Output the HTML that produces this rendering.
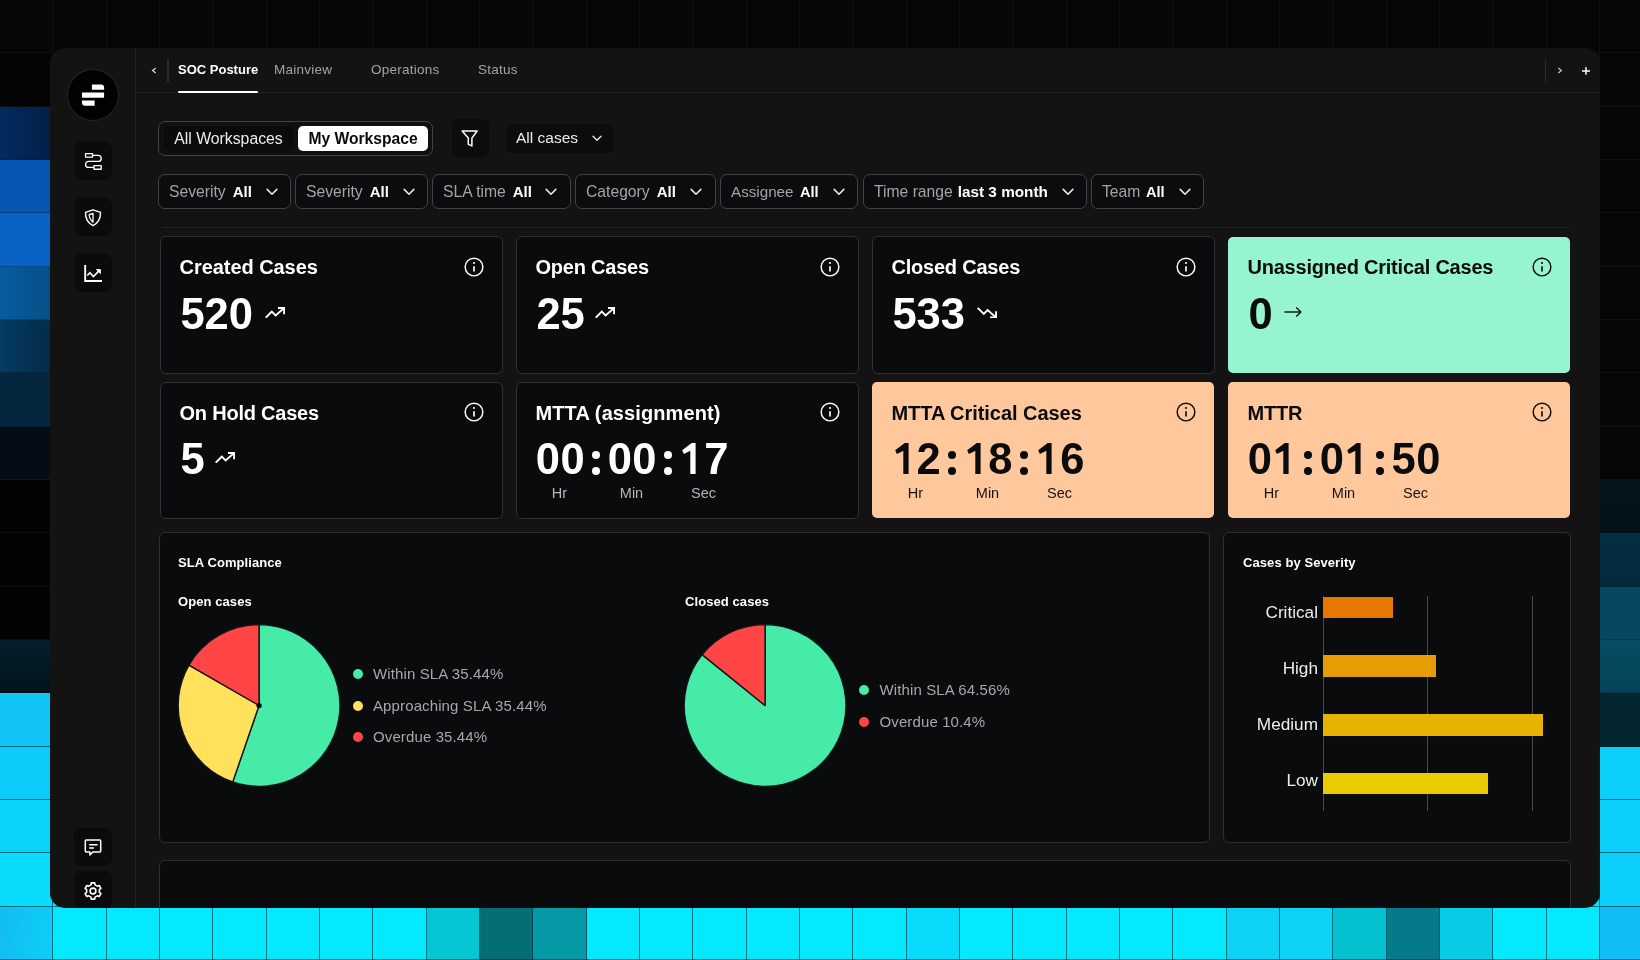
<!DOCTYPE html>
<html lang="en">
<head>
<meta charset="utf-8">
<title>SOC Posture</title>
<style>
*{box-sizing:border-box;margin:0;padding:0}
html,body{width:1640px;height:960px;overflow:hidden;background:#060607}
body{font-family:"Liberation Sans",sans-serif;color:#fff;position:relative}
.c{position:absolute;width:53.34px;height:53.34px}
.win{will-change:transform;position:absolute;left:50px;top:48px;width:1550px;height:860px;border-radius:15px;background:#131314;overflow:hidden}
.in{position:absolute;left:-50px;top:-48px;width:1640px;height:960px}
.in>*{position:absolute}
.vline{left:135px;top:48px;width:1px;height:860px;background:#232326}
.hline{left:136px;top:92px;width:1464px;height:1px;background:#232326}
.logo{left:68px;top:70px;width:50px;height:50px;border-radius:50%;background:#020203;box-shadow:0 0 0 1px #242427}
.logo b{position:absolute;background:#fff;border-radius:1.5px;height:5px}
.sb{left:74px;width:38px;height:38px;border-radius:7px;background:#0b0b0d;color:#fff}
.sb svg{position:absolute;left:9px;top:9px}
.tab{top:62px;font-size:13.500px;line-height:16px;color:#a3a3a8;white-space:nowrap;letter-spacing:.25px}
.tab.act{color:#fff;font-weight:700;font-size:13px;letter-spacing:0}
.ul{left:178px;top:91px;width:80px;height:2px;background:#fff;border-radius:1px}
.tsep{width:1.500px;background:#2c2c2f;border-radius:1px}
.nav{top:62px;font-size:13px;line-height:16px;color:#c8c8cc}
.ws{left:158px;top:121px;width:275px;height:35px;border:1px solid #424248;border-radius:7px;background:#101012}
.ws1{left:164px;top:126px;width:129px;height:25px;border-radius:5px;background:#0b0b0c;color:#ececee;font-size:15.800px;line-height:25px;text-align:center}
.ws2{left:298px;top:126px;width:130px;height:25px;border-radius:5px;background:#fff;color:#0a0a0b;font-size:15.650px;font-weight:700;line-height:25px;text-align:center}
.fb{left:452px;top:119px;width:37px;height:38px;border-radius:7px;background:#0c0c0d}
.ac{left:507px;top:124px;width:106px;height:29px;border-radius:6px;background:#0c0c0d;font-size:15.5px;line-height:28px;padding-left:9px;color:#ececee}
.ac .chev{position:absolute;right:11.500px;top:11px;width:10px;height:6.700px}
.f{top:174px;height:35px;border:1px solid #424248;border-radius:7px;background:#0c0c0e;font-size:15px;line-height:33px;padding-left:10px;white-space:nowrap}
.fl{color:#a3a3a8}
.fv{color:#fff;font-weight:700}
.fc{display:inline-block;vertical-align:top;height:33px;color:#e8e8ea}
.fc svg{display:block;margin-top:12.800px}
.div{left:162px;top:227px;width:1408px;height:1px;background:#222225}
.card{width:343px;height:137px;border:1px solid #2f2f34;border-radius:6px;background:#0a0b0d;color:#fff}
.card>*{position:absolute}
.card.green{background:#96f5cf;border-color:transparent;border-top-width:0;color:#0a0b0d;border-radius:5px}
.card.orange{background:#ffc79c;border-color:transparent;color:#0a0b0d;border-radius:5px}
.ct{left:18.500px;top:17.500px;font-size:20px;font-weight:700;line-height:24px;white-space:nowrap;letter-spacing:-0.22px}
.info{left:301px;top:17.500px}
.r2 .info{top:16.500px}
.num{left:19.500px;top:53px;font-size:43.500px;font-weight:700;line-height:48px;letter-spacing:-0.1px}
.ti{top:69.600px}
.ti svg{display:block}
.r2 .num{top:52px}
.r2 .ti{top:68.600px}
.tm{top:52px;width:49.200px;height:48px;font-size:43.500px;font-weight:700;line-height:48px;white-space:nowrap}
.d{display:inline-block;width:24.600px;height:48px;text-align:center;vertical-align:top;position:relative}
.one{position:absolute;left:0;top:0}
.col{top:67.5px;width:8px;height:25px}
.col:before,.col:after{content:"";position:absolute;left:0;width:8px;height:8px;border-radius:50%;background:currentColor}
.col:before{top:0}.col:after{top:16.5px}
.tl{top:101px;width:48px;margin-left:-1.5px;font-size:14.5px;line-height:18px;text-align:center;color:#b4b4b8}
.orange .tl,.green .tl{color:#17140f}
.panel{border:1px solid #2f2f34;border-radius:6px;background:#0a0b0d}
.pt{font-size:13px;font-weight:700;line-height:16px;color:#fff;white-space:nowrap;letter-spacing:.08px}
.lg{font-size:15px;line-height:20px;color:#a6a6ab;white-space:nowrap;padding-left:21px;letter-spacing:.12px}
.lg i{position:absolute;left:0.500px;top:5px;width:10px;height:10px;border-radius:50%}
.gl{top:596px;width:1px;height:215px;background:#4a4a4f}
.bar{left:1323px;height:21.5px}
.bl{left:1217px;width:101px;text-align:right;font-size:17.2px;line-height:28px;color:#ededf0}
</style>
</head>
<body>
<div class="c" style="left:0.0px;top:0.0px;background:#060607;box-shadow:inset -1px -1px 0 0 rgba(255,255,255,0.045);"></div>
<div class="c" style="left:53.33px;top:0.0px;background:#060607;box-shadow:inset -1px -1px 0 0 rgba(255,255,255,0.045);"></div>
<div class="c" style="left:106.67px;top:0.0px;background:#060607;box-shadow:inset -1px -1px 0 0 rgba(255,255,255,0.045);"></div>
<div class="c" style="left:160.0px;top:0.0px;background:#060607;box-shadow:inset -1px -1px 0 0 rgba(255,255,255,0.045);"></div>
<div class="c" style="left:213.33px;top:0.0px;background:#060607;box-shadow:inset -1px -1px 0 0 rgba(255,255,255,0.045);"></div>
<div class="c" style="left:266.67px;top:0.0px;background:#060607;box-shadow:inset -1px -1px 0 0 rgba(255,255,255,0.045);"></div>
<div class="c" style="left:320.0px;top:0.0px;background:#060607;box-shadow:inset -1px -1px 0 0 rgba(255,255,255,0.045);"></div>
<div class="c" style="left:373.33px;top:0.0px;background:#060607;box-shadow:inset -1px -1px 0 0 rgba(255,255,255,0.045);"></div>
<div class="c" style="left:426.67px;top:0.0px;background:#060607;box-shadow:inset -1px -1px 0 0 rgba(255,255,255,0.045);"></div>
<div class="c" style="left:480.0px;top:0.0px;background:#060607;box-shadow:inset -1px -1px 0 0 rgba(255,255,255,0.045);"></div>
<div class="c" style="left:533.33px;top:0.0px;background:#060607;box-shadow:inset -1px -1px 0 0 rgba(255,255,255,0.045);"></div>
<div class="c" style="left:586.67px;top:0.0px;background:#060607;box-shadow:inset -1px -1px 0 0 rgba(255,255,255,0.045);"></div>
<div class="c" style="left:640.0px;top:0.0px;background:#060607;box-shadow:inset -1px -1px 0 0 rgba(255,255,255,0.045);"></div>
<div class="c" style="left:693.33px;top:0.0px;background:#060607;box-shadow:inset -1px -1px 0 0 rgba(255,255,255,0.045);"></div>
<div class="c" style="left:746.67px;top:0.0px;background:#060607;box-shadow:inset -1px -1px 0 0 rgba(255,255,255,0.045);"></div>
<div class="c" style="left:800.0px;top:0.0px;background:#060607;box-shadow:inset -1px -1px 0 0 rgba(255,255,255,0.045);"></div>
<div class="c" style="left:853.33px;top:0.0px;background:#060607;box-shadow:inset -1px -1px 0 0 rgba(255,255,255,0.045);"></div>
<div class="c" style="left:906.67px;top:0.0px;background:#060607;box-shadow:inset -1px -1px 0 0 rgba(255,255,255,0.045);"></div>
<div class="c" style="left:960.0px;top:0.0px;background:#060607;box-shadow:inset -1px -1px 0 0 rgba(255,255,255,0.045);"></div>
<div class="c" style="left:1013.33px;top:0.0px;background:#060607;box-shadow:inset -1px -1px 0 0 rgba(255,255,255,0.045);"></div>
<div class="c" style="left:1066.67px;top:0.0px;background:#060607;box-shadow:inset -1px -1px 0 0 rgba(255,255,255,0.045);"></div>
<div class="c" style="left:1120.0px;top:0.0px;background:#060607;box-shadow:inset -1px -1px 0 0 rgba(255,255,255,0.045);"></div>
<div class="c" style="left:1173.33px;top:0.0px;background:#060607;box-shadow:inset -1px -1px 0 0 rgba(255,255,255,0.045);"></div>
<div class="c" style="left:1226.67px;top:0.0px;background:#060607;box-shadow:inset -1px -1px 0 0 rgba(255,255,255,0.045);"></div>
<div class="c" style="left:1280.0px;top:0.0px;background:#060607;box-shadow:inset -1px -1px 0 0 rgba(255,255,255,0.045);"></div>
<div class="c" style="left:1333.33px;top:0.0px;background:#060607;box-shadow:inset -1px -1px 0 0 rgba(255,255,255,0.045);"></div>
<div class="c" style="left:1386.67px;top:0.0px;background:#060607;box-shadow:inset -1px -1px 0 0 rgba(255,255,255,0.045);"></div>
<div class="c" style="left:1440.0px;top:0.0px;background:#060607;box-shadow:inset -1px -1px 0 0 rgba(255,255,255,0.045);"></div>
<div class="c" style="left:1493.33px;top:0.0px;background:#060607;box-shadow:inset -1px -1px 0 0 rgba(255,255,255,0.045);"></div>
<div class="c" style="left:1546.67px;top:0.0px;background:#060607;box-shadow:inset -1px -1px 0 0 rgba(255,255,255,0.045);"></div>
<div class="c" style="left:1600.0px;top:0.0px;background:#060607;box-shadow:inset -1px -1px 0 0 rgba(255,255,255,0.045);"></div>
<div class="c" style="left:0.0px;top:53.33px;background:#040405;box-shadow:inset -1px -1px 0 0 rgba(255,255,255,0.045);"></div>
<div class="c" style="left:0.0px;top:106.67px;background:linear-gradient(90deg,#042a60,#031f45);box-shadow:inset -1px -1px 0 0 rgba(0,0,0,0.25);"></div>
<div class="c" style="left:0.0px;top:160.0px;background:#0655b0;box-shadow:inset -1px -1px 0 0 rgba(0,0,0,0.25);"></div>
<div class="c" style="left:0.0px;top:213.33px;background:#0762c4;box-shadow:inset -1px -1px 0 0 rgba(0,0,0,0.25);"></div>
<div class="c" style="left:0.0px;top:266.67px;background:linear-gradient(90deg,#075c9f,#064f85);box-shadow:inset -1px -1px 0 0 rgba(0,0,0,0.25);"></div>
<div class="c" style="left:0.0px;top:320.0px;background:linear-gradient(90deg,#053a62,#042c48);box-shadow:inset -1px -1px 0 0 rgba(0,0,0,0.25);"></div>
<div class="c" style="left:0.0px;top:373.33px;background:#04273f;box-shadow:inset -1px -1px 0 0 rgba(0,0,0,0.25);"></div>
<div class="c" style="left:0.0px;top:426.67px;background:#040d15;box-shadow:inset -1px -1px 0 0 rgba(255,255,255,0.045);"></div>
<div class="c" style="left:0.0px;top:480.0px;background:#030304;box-shadow:inset -1px -1px 0 0 rgba(255,255,255,0.045);"></div>
<div class="c" style="left:0.0px;top:533.33px;background:#030304;box-shadow:inset -1px -1px 0 0 rgba(255,255,255,0.045);"></div>
<div class="c" style="left:0.0px;top:586.67px;background:#030304;box-shadow:inset -1px -1px 0 0 rgba(255,255,255,0.045);"></div>
<div class="c" style="left:0.0px;top:640.0px;background:linear-gradient(180deg,#041f2b,#02131b);box-shadow:inset -1px -1px 0 0 rgba(0,0,0,0.2);"></div>
<div class="c" style="left:0.0px;top:693.33px;background:#10c4f6;box-shadow:inset -1px -1px 0 0 rgba(0,50,70,0.68);"></div>
<div class="c" style="left:0.0px;top:746.67px;background:#0dcbf8;box-shadow:inset -1px -1px 0 0 rgba(0,50,70,0.68);"></div>
<div class="c" style="left:0.0px;top:800.0px;background:#0ad3fa;box-shadow:inset -1px -1px 0 0 rgba(0,50,70,0.68);"></div>
<div class="c" style="left:0.0px;top:853.33px;background:#07dcfc;box-shadow:inset -1px -1px 0 0 rgba(0,50,70,0.68);"></div>
<div class="c" style="left:1600.0px;top:53.33px;background:#060607;box-shadow:inset -1px -1px 0 0 rgba(255,255,255,0.045);"></div>
<div class="c" style="left:1600.0px;top:106.67px;background:#060607;box-shadow:inset -1px -1px 0 0 rgba(255,255,255,0.045);"></div>
<div class="c" style="left:1600.0px;top:160.0px;background:#060607;box-shadow:inset -1px -1px 0 0 rgba(255,255,255,0.045);"></div>
<div class="c" style="left:1600.0px;top:213.33px;background:#060607;box-shadow:inset -1px -1px 0 0 rgba(255,255,255,0.045);"></div>
<div class="c" style="left:1600.0px;top:266.67px;background:#060607;box-shadow:inset -1px -1px 0 0 rgba(255,255,255,0.045);"></div>
<div class="c" style="left:1600.0px;top:320.0px;background:#060607;box-shadow:inset -1px -1px 0 0 rgba(255,255,255,0.045);"></div>
<div class="c" style="left:1600.0px;top:373.33px;background:#060607;box-shadow:inset -1px -1px 0 0 rgba(255,255,255,0.045);"></div>
<div class="c" style="left:1600.0px;top:426.67px;background:#060607;box-shadow:inset -1px -1px 0 0 rgba(255,255,255,0.045);"></div>
<div class="c" style="left:1600.0px;top:480.0px;background:linear-gradient(180deg,#03151d,#031118);box-shadow:inset -1px -1px 0 0 rgba(0,0,0,0.2);"></div>
<div class="c" style="left:1600.0px;top:533.33px;background:linear-gradient(180deg,#052e43,#042a3c);box-shadow:inset -1px -1px 0 0 rgba(0,0,0,0.2);"></div>
<div class="c" style="left:1600.0px;top:586.67px;background:#064862;box-shadow:inset -1px -1px 0 0 rgba(0,0,0,0.2);"></div>
<div class="c" style="left:1600.0px;top:640.0px;background:linear-gradient(180deg,#064c63,#054459);box-shadow:inset -1px -1px 0 0 rgba(0,0,0,0.2);"></div>
<div class="c" style="left:1600.0px;top:693.33px;background:#042630;box-shadow:inset -1px -1px 0 0 rgba(0,0,0,0.2);"></div>
<div class="c" style="left:1600.0px;top:746.67px;background:#0cd0fb;box-shadow:inset -1px -1px 0 0 rgba(0,50,70,0.68);"></div>
<div class="c" style="left:1600.0px;top:800.0px;background:#0cd0fb;box-shadow:inset -1px -1px 0 0 rgba(0,50,70,0.68);"></div>
<div class="c" style="left:1600.0px;top:853.33px;background:#0cd0fb;box-shadow:inset -1px -1px 0 0 rgba(0,50,70,0.68);"></div>
<div class="c" style="left:0.0px;top:906.67px;background:linear-gradient(100deg,#13bbf2,#0bd0f8);box-shadow:inset -1px -1px 0 0 rgba(0,50,70,0.68);"></div>
<div class="c" style="left:53.33px;top:906.67px;background:#05e9ff;box-shadow:inset -1px -1px 0 0 rgba(0,50,70,0.68);"></div>
<div class="c" style="left:106.67px;top:906.67px;background:#05e9ff;box-shadow:inset -1px -1px 0 0 rgba(0,50,70,0.68);"></div>
<div class="c" style="left:160.0px;top:906.67px;background:#05e9ff;box-shadow:inset -1px -1px 0 0 rgba(0,50,70,0.68);"></div>
<div class="c" style="left:213.33px;top:906.67px;background:#05e9ff;box-shadow:inset -1px -1px 0 0 rgba(0,50,70,0.68);"></div>
<div class="c" style="left:266.67px;top:906.67px;background:#05e9ff;box-shadow:inset -1px -1px 0 0 rgba(0,50,70,0.68);"></div>
<div class="c" style="left:320.0px;top:906.67px;background:#05e9ff;box-shadow:inset -1px -1px 0 0 rgba(0,50,70,0.68);"></div>
<div class="c" style="left:373.33px;top:906.67px;background:#05e9ff;box-shadow:inset -1px -1px 0 0 rgba(0,50,70,0.68);"></div>
<div class="c" style="left:426.67px;top:906.67px;background:#06c6d6;box-shadow:inset -1px -1px 0 0 rgba(0,50,70,0.68);"></div>
<div class="c" style="left:480.0px;top:906.67px;background:#056d74;box-shadow:inset -1px -1px 0 0 rgba(0,50,70,0.68);"></div>
<div class="c" style="left:533.33px;top:906.67px;background:#0599a6;box-shadow:inset -1px -1px 0 0 rgba(0,50,70,0.68);"></div>
<div class="c" style="left:586.67px;top:906.67px;background:#05e9ff;box-shadow:inset -1px -1px 0 0 rgba(0,50,70,0.68);"></div>
<div class="c" style="left:640.0px;top:906.67px;background:#05e9ff;box-shadow:inset -1px -1px 0 0 rgba(0,50,70,0.68);"></div>
<div class="c" style="left:693.33px;top:906.67px;background:#05e9ff;box-shadow:inset -1px -1px 0 0 rgba(0,50,70,0.68);"></div>
<div class="c" style="left:746.67px;top:906.67px;background:#05e9ff;box-shadow:inset -1px -1px 0 0 rgba(0,50,70,0.68);"></div>
<div class="c" style="left:800.0px;top:906.67px;background:#05e9ff;box-shadow:inset -1px -1px 0 0 rgba(0,50,70,0.68);"></div>
<div class="c" style="left:853.33px;top:906.67px;background:#05e9ff;box-shadow:inset -1px -1px 0 0 rgba(0,50,70,0.68);"></div>
<div class="c" style="left:906.67px;top:906.67px;background:#08dcfc;box-shadow:inset -1px -1px 0 0 rgba(0,50,70,0.68);"></div>
<div class="c" style="left:960.0px;top:906.67px;background:#05e9ff;box-shadow:inset -1px -1px 0 0 rgba(0,50,70,0.68);"></div>
<div class="c" style="left:1013.33px;top:906.67px;background:#05e9ff;box-shadow:inset -1px -1px 0 0 rgba(0,50,70,0.68);"></div>
<div class="c" style="left:1066.67px;top:906.67px;background:#05e9ff;box-shadow:inset -1px -1px 0 0 rgba(0,50,70,0.68);"></div>
<div class="c" style="left:1120.0px;top:906.67px;background:#05e9ff;box-shadow:inset -1px -1px 0 0 rgba(0,50,70,0.68);"></div>
<div class="c" style="left:1173.33px;top:906.67px;background:#05e9ff;box-shadow:inset -1px -1px 0 0 rgba(0,50,70,0.68);"></div>
<div class="c" style="left:1226.67px;top:906.67px;background:#0cd2f6;box-shadow:inset -1px -1px 0 0 rgba(0,50,70,0.68);"></div>
<div class="c" style="left:1280.0px;top:906.67px;background:#0cd2f6;box-shadow:inset -1px -1px 0 0 rgba(0,50,70,0.68);"></div>
<div class="c" style="left:1333.33px;top:906.67px;background:#05c0d0;box-shadow:inset -1px -1px 0 0 rgba(0,50,70,0.68);"></div>
<div class="c" style="left:1386.67px;top:906.67px;background:#057a88;box-shadow:inset -1px -1px 0 0 rgba(0,50,70,0.68);"></div>
<div class="c" style="left:1440.0px;top:906.67px;background:#08cce6;box-shadow:inset -1px -1px 0 0 rgba(0,50,70,0.68);"></div>
<div class="c" style="left:1493.33px;top:906.67px;background:#05e9ff;box-shadow:inset -1px -1px 0 0 rgba(0,50,70,0.68);"></div>
<div class="c" style="left:1546.67px;top:906.67px;background:#05e9ff;box-shadow:inset -1px -1px 0 0 rgba(0,50,70,0.68);"></div>
<div class="c" style="left:1600.0px;top:906.67px;background:#10bdf4;box-shadow:inset -1px -1px 0 0 rgba(0,50,70,0.68);"></div>
<div class="c" style="left:53.33px;top:853.33px;background:#05e9ff;box-shadow:inset -1px -1px 0 0 rgba(0,50,70,0.68);"></div>
<div class="c" style="left:1546.67px;top:853.33px;background:#05e9ff;box-shadow:inset -1px -1px 0 0 rgba(0,50,70,0.68);"></div>
<div class="c" style="left:53.33px;top:53.33px;background:#060607;box-shadow:inset -1px -1px 0 0 rgba(255,255,255,0.045);"></div>
<div class="c" style="left:1546.67px;top:53.33px;background:#060607;box-shadow:inset -1px -1px 0 0 rgba(255,255,255,0.045);"></div>
<div class="win"><div class="in">
  <div class="vline"></div>
  <div class="hline"></div>
  <div class="logo"><svg style="position:absolute;left:0;top:0" width="50" height="50" viewBox="0 0 50 50" fill="#fff"><path d="M24.400 14.600H33.100A3 3 0 0 1 36.100 17.600V19.700H23.900V15.100A0.500 0.500 0 0 1 24.400 14.600Z"/><rect x="14" y="22.600" width="22.100" height="5.100" rx="0.600"/><path d="M14 30.600H26.650V35.200A0.500 0.500 0 0 1 26.150 35.700H17A3 3 0 0 1 14 32.700Z"/></svg></div>

  <div class="sb" style="top:142px"><svg width="20" height="20" viewBox="0 0 20 20" fill="none" stroke="#fff" stroke-width="1.300" stroke-linejoin="miter" stroke-linecap="butt"><rect x="2.550" y="2.650" width="7" height="3.500" rx="0.200"/><rect x="10.950" y="14.650" width="7.300" height="3.600" rx="0.200"/><path d="M9.550 4.400H15.250a3 3 0 0 1 0 6H5.550a3 3 0 0 0 0 6H10.950"/></svg></div>
  <div class="sb" style="top:198px"><svg style="top:10px" width="20" height="20" viewBox="0 0 20 20" fill="none" stroke="#fff" stroke-width="1.4" stroke-linejoin="round"><path d="M10 1.800l7.500 2.600c.2 5.800-2.400 10.400-7.500 13.200C4.900 14.800 2.300 10.200 2.500 4.400z"/><path d="M10 5.300L6.200 6.700c.2 3.300 1.400 5.600 3.800 7.500z" stroke-width="1.300"/></svg></div>
  <div class="sb" style="top:254px"><svg width="20" height="20" viewBox="0 0 20 20" fill="none" stroke="#fff" stroke-width="1.900" stroke-linejoin="miter" stroke-linecap="butt"><path d="M2.200 1.900V18.050H19"/><path d="M4.300 12.500L6.900 9.700L10.400 13.600L16.400 7.400" stroke-width="1.600"/><path d="M13.300 6.500H17.500V10.700Z" fill="#fff" stroke-width="0.800" stroke-linejoin="miter"/></svg></div>
  <div class="sb" style="top:828px"><svg width="20" height="20" viewBox="0 0 20 20" fill="none" stroke="#fff" stroke-width="1.500" stroke-linejoin="round" stroke-linecap="butt"><path d="M3.300 3.050h13.400a1 1 0 0 1 1 1v9.900a1 1 0 0 1-1 1H9.800l-2.900 3v-3H3.300a1 1 0 0 1-1-1V4.050a1 1 0 0 1 1-1z"/><path d="M6.200 7.750h8.400M6.200 11h4.700" stroke-width="1.700"/></svg></div>
  <div class="sb" style="top:871px"><svg style="top:9.700px" width="20" height="20" viewBox="0 0 20 20" fill="none" stroke="#fff" stroke-width="1.600" stroke-linejoin="round"><path d="M7.99 3.82L8.27 1.88L11.73 1.88L12.01 3.82L14.35 5.17L16.17 4.45L17.89 7.44L16.36 8.65L16.36 11.35L17.89 12.56L16.17 15.55L14.35 14.83L12.01 16.18L11.73 18.12L8.27 18.12L7.99 16.18L5.65 14.83L3.83 15.55L2.11 12.56L3.64 11.35L3.64 8.65L2.11 7.44L3.83 4.45L5.65 5.17Z"/><circle cx="10" cy="10" r="2.900"/></svg></div>

  <svg style="left:150.900px;top:67px" width="6" height="7" viewBox="0 0 6 7" fill="none" stroke="#d4d4d8" stroke-width="1.250"><path d="M4.700 1.100L1.600 3.500L4.700 5.900"/></svg>
  <div class="tsep" style="left:167.300px;top:59px;height:23px"></div>
  <div class="tab act" style="left:178px">SOC Posture</div>
  <div class="tab" style="left:274px">Mainview</div>
  <div class="tab" style="left:371px">Operations</div>
  <div class="tab" style="left:478px">Status</div>
  <div class="ul"></div>
  <div class="tsep" style="left:1544.700px;top:59px;height:23px"></div>
  <svg style="left:1557.200px;top:67.100px" width="6" height="7" viewBox="0 0 6 7" fill="none" stroke="#c4c4c8" stroke-width="1.250"><path d="M1.300 1.100L4.400 3.500L1.300 5.900"/></svg>
  <svg style="left:1582px;top:66.500px" width="8" height="8" viewBox="0 0 8 8" fill="none" stroke="#fff" stroke-width="1.500"><path d="M0 4H8M4 0.300V7.700"/></svg>

  <div class="ws"></div>
  <div class="ws1">All Workspaces</div>
  <div class="ws2">My Workspace</div>
  <div class="fb"><svg style="position:absolute;left:9px;top:9px" width="20" height="20" viewBox="0 0 20 20" fill="none" stroke="#fff" stroke-width="1.500" stroke-linejoin="round"><path d="M1.200 3H16.100L10.900 10.100V17.900L7.300 16.400V10.100Z"/></svg></div>
  <div class="ac">All cases<svg class="chev" viewBox="0 0 12 8" width="12" height="8" fill="none" stroke="currentColor" stroke-width="1.6" stroke-linecap="round" stroke-linejoin="round"><path d="M1.2 1.4L6 6.2l4.8-4.8"/></svg></div>

<div class="f" style="left:158px;width:133px"><span class="fl" style="font-size:15.7px">Severity</span><span class="fv" style="margin-left:7px;font-size:15px">All</span><span class="fc" style="margin-left:13.8px"><svg class="chev" viewBox="0 0 12 8" width="12" height="8" fill="none" stroke="currentColor" stroke-width="1.6" stroke-linecap="round" stroke-linejoin="round"><path d="M1.2 1.4L6 6.2l4.8-4.8"/></svg></span></div>
<div class="f" style="left:295px;width:133px"><span class="fl" style="font-size:15.7px">Severity</span><span class="fv" style="margin-left:7px;font-size:15px">All</span><span class="fc" style="margin-left:13.8px"><svg class="chev" viewBox="0 0 12 8" width="12" height="8" fill="none" stroke="currentColor" stroke-width="1.6" stroke-linecap="round" stroke-linejoin="round"><path d="M1.2 1.4L6 6.2l4.8-4.8"/></svg></span></div>
<div class="f" style="left:432px;width:139px"><span class="fl" style="font-size:15.7px">SLA time</span><span class="fv" style="margin-left:7px;font-size:15px">All</span><span class="fc" style="margin-left:13px"><svg class="chev" viewBox="0 0 12 8" width="12" height="8" fill="none" stroke="currentColor" stroke-width="1.6" stroke-linecap="round" stroke-linejoin="round"><path d="M1.2 1.4L6 6.2l4.8-4.8"/></svg></span></div>
<div class="f" style="left:575px;width:141px"><span class="fl" style="font-size:15.7px">Category</span><span class="fv" style="margin-left:7px;font-size:15px">All</span><span class="fc" style="margin-left:14px"><svg class="chev" viewBox="0 0 12 8" width="12" height="8" fill="none" stroke="currentColor" stroke-width="1.6" stroke-linecap="round" stroke-linejoin="round"><path d="M1.2 1.4L6 6.2l4.8-4.8"/></svg></span></div>
<div class="f" style="left:720px;width:138px"><span class="fl" style="font-size:15.2px">Assignee</span><span class="fv" style="margin-left:6.5px;font-size:14.6px">All</span><span class="fc" style="margin-left:14px"><svg class="chev" viewBox="0 0 12 8" width="12" height="8" fill="none" stroke="currentColor" stroke-width="1.6" stroke-linecap="round" stroke-linejoin="round"><path d="M1.2 1.4L6 6.2l4.8-4.8"/></svg></span></div>
<div class="f" style="left:863px;width:224px"><span class="fl" style="font-size:15.7px">Time range</span><span class="fv" style="margin-left:5px;font-size:15.3px">last 3 month</span><span class="fc" style="margin-left:14.5px"><svg class="chev" viewBox="0 0 12 8" width="12" height="8" fill="none" stroke="currentColor" stroke-width="1.6" stroke-linecap="round" stroke-linejoin="round"><path d="M1.2 1.4L6 6.2l4.8-4.8"/></svg></span></div>
<div class="f" style="left:1091px;width:113px"><span class="fl" style="font-size:15.7px">Team</span><span class="fv" style="margin-left:5.5px;font-size:14.6px">All</span><span class="fc" style="margin-left:14px"><svg class="chev" viewBox="0 0 12 8" width="12" height="8" fill="none" stroke="currentColor" stroke-width="1.6" stroke-linecap="round" stroke-linejoin="round"><path d="M1.2 1.4L6 6.2l4.8-4.8"/></svg></span></div>
  <div class="div"></div>
<div class="card " style="left:160px;top:236px;height:138px"><div class="ct" style="letter-spacing:-0.05px">Created Cases</div><svg class="info" viewBox="0 0 24 24" width="24" height="24" fill="none" stroke="currentColor" stroke-width="1.45"><circle cx="12" cy="12" r="8.850"/><path d="M12 11.200v5.400" stroke-width="1.650"/><circle cx="12" cy="8" r="1.050" fill="currentColor" stroke="none"/></svg><div class="num">520</div><div class="ti" style="left:104.4px"><svg class="trend" viewBox="0 0 20 11.5" width="20" height="11.5" fill="none" stroke="currentColor" stroke-width="1.9" stroke-linecap="butt" stroke-linejoin="miter"><path d="M0.7 10.7L6.800 4.600L10.600 8.400L18.800 1.300"/><path d="M13 1H19.100V7.300"/></svg></div></div>
<div class="card " style="left:516px;top:236px;height:138px"><div class="ct">Open Cases</div><svg class="info" viewBox="0 0 24 24" width="24" height="24" fill="none" stroke="currentColor" stroke-width="1.45"><circle cx="12" cy="12" r="8.850"/><path d="M12 11.200v5.400" stroke-width="1.650"/><circle cx="12" cy="8" r="1.050" fill="currentColor" stroke="none"/></svg><div class="num">25</div><div class="ti" style="left:78.4px"><svg class="trend" viewBox="0 0 20 11.5" width="20" height="11.5" fill="none" stroke="currentColor" stroke-width="1.9" stroke-linecap="butt" stroke-linejoin="miter"><path d="M0.7 10.7L6.800 4.600L10.600 8.400L18.800 1.300"/><path d="M13 1H19.100V7.300"/></svg></div></div>
<div class="card " style="left:872px;top:236px;height:138px"><div class="ct">Closed Cases</div><svg class="info" viewBox="0 0 24 24" width="24" height="24" fill="none" stroke="currentColor" stroke-width="1.45"><circle cx="12" cy="12" r="8.850"/><path d="M12 11.200v5.400" stroke-width="1.650"/><circle cx="12" cy="8" r="1.050" fill="currentColor" stroke="none"/></svg><div class="num">533</div><div class="ti" style="left:103.8px"><svg class="trend" viewBox="0 0 20 11.5" width="20" height="11.5" fill="none" stroke="currentColor" stroke-width="1.9" stroke-linecap="butt" stroke-linejoin="miter"><path d="M0.7 0.8L6.800 6.900L10.600 3.100L18.800 10.200"/><path d="M13 10.500H19.100V4.200"/></svg></div></div>
<div class="card green" style="left:1228px;top:237px;width:342px;height:136px"><div class="ct">Unassigned Critical Cases</div><svg class="info" viewBox="0 0 24 24" width="24" height="24" fill="none" stroke="currentColor" stroke-width="1.45"><circle cx="12" cy="12" r="8.850"/><path d="M12 11.200v5.400" stroke-width="1.650"/><circle cx="12" cy="8" r="1.050" fill="currentColor" stroke="none"/></svg><div class="num">0</div><div class="ti" style="left:55.1px"><svg class="trend" viewBox="0 0 18 10" width="18" height="10" fill="none" stroke="currentColor" stroke-width="1.35" stroke-linecap="butt" stroke-linejoin="miter"><path d="M0.3 5H16.800"/><path d="M12.300 0.500L16.900 5L12.300 9.500"/></svg></div></div>
<div class="card  r2" style="left:160px;top:382px;height:137px"><div class="ct">On Hold Cases</div><svg class="info" viewBox="0 0 24 24" width="24" height="24" fill="none" stroke="currentColor" stroke-width="1.45"><circle cx="12" cy="12" r="8.850"/><path d="M12 11.200v5.400" stroke-width="1.650"/><circle cx="12" cy="8" r="1.050" fill="currentColor" stroke="none"/></svg><div class="num">5</div><div class="ti" style="left:54.4px"><svg class="trend" viewBox="0 0 20 11.5" width="20" height="11.5" fill="none" stroke="currentColor" stroke-width="1.9" stroke-linecap="butt" stroke-linejoin="miter"><path d="M0.7 10.7L6.800 4.600L10.600 8.400L18.800 1.300"/><path d="M13 1H19.100V7.300"/></svg></div></div>
<div class="card  r2" style="left:516px;top:382px;height:137px"><div class="ct" style="letter-spacing:0.1px">MTTA (assignment)</div><svg class="info" viewBox="0 0 24 24" width="24" height="24" fill="none" stroke="currentColor" stroke-width="1.45"><circle cx="12" cy="12" r="8.850"/><path d="M12 11.200v5.400" stroke-width="1.650"/><circle cx="12" cy="8" r="1.050" fill="currentColor" stroke="none"/></svg><div class="tm" style="left:18.650px"><span class="d">0</span><span class="d">0</span></div><div class="col" style="left:75px"></div><div class="tm" style="left:90.500px"><span class="d">0</span><span class="d">0</span></div><div class="col" style="left:146.600px"></div><div class="tm" style="left:162.400px"><span class="d"><svg class="one" viewBox="0 0 24.6 48" width="24.6" height="48"><path fill="currentColor" d="M16.600 8.100V39.100H11.300V15.700L4.900 19L3.200 15.300L12.700 8.100Z"/></svg></span><span class="d">7</span></div><div class="tl" style="left:20px">Hr</div><div class="tl" style="left:92px">Min</div><div class="tl" style="left:164px">Sec</div></div>
<div class="card orange r2" style="left:872px;top:382px;width:342px;height:136px"><div class="ct" style="letter-spacing:-0.05px">MTTA Critical Cases</div><svg class="info" viewBox="0 0 24 24" width="24" height="24" fill="none" stroke="currentColor" stroke-width="1.45"><circle cx="12" cy="12" r="8.850"/><path d="M12 11.200v5.400" stroke-width="1.650"/><circle cx="12" cy="8" r="1.050" fill="currentColor" stroke="none"/></svg><div class="tm" style="left:18.650px"><span class="d"><svg class="one" viewBox="0 0 24.6 48" width="24.6" height="48"><path fill="currentColor" d="M16.600 8.100V39.100H11.300V15.700L4.900 19L3.200 15.300L12.700 8.100Z"/></svg></span><span class="d">2</span></div><div class="col" style="left:75px"></div><div class="tm" style="left:90.500px"><span class="d"><svg class="one" viewBox="0 0 24.6 48" width="24.6" height="48"><path fill="currentColor" d="M16.600 8.100V39.100H11.300V15.700L4.900 19L3.200 15.300L12.700 8.100Z"/></svg></span><span class="d">8</span></div><div class="col" style="left:146.600px"></div><div class="tm" style="left:162.400px"><span class="d"><svg class="one" viewBox="0 0 24.6 48" width="24.6" height="48"><path fill="currentColor" d="M16.600 8.100V39.100H11.300V15.700L4.900 19L3.200 15.300L12.700 8.100Z"/></svg></span><span class="d">6</span></div><div class="tl" style="left:20px">Hr</div><div class="tl" style="left:92px">Min</div><div class="tl" style="left:164px">Sec</div></div>
<div class="card orange r2" style="left:1228px;top:382px;width:342px;height:136px"><div class="ct">MTTR</div><svg class="info" viewBox="0 0 24 24" width="24" height="24" fill="none" stroke="currentColor" stroke-width="1.45"><circle cx="12" cy="12" r="8.850"/><path d="M12 11.200v5.400" stroke-width="1.650"/><circle cx="12" cy="8" r="1.050" fill="currentColor" stroke="none"/></svg><div class="tm" style="left:18.650px"><span class="d">0</span><span class="d"><svg class="one" viewBox="0 0 24.6 48" width="24.6" height="48"><path fill="currentColor" d="M16.600 8.100V39.100H11.300V15.700L4.900 19L3.200 15.300L12.700 8.100Z"/></svg></span></div><div class="col" style="left:75px"></div><div class="tm" style="left:90.500px"><span class="d">0</span><span class="d"><svg class="one" viewBox="0 0 24.6 48" width="24.6" height="48"><path fill="currentColor" d="M16.600 8.100V39.100H11.300V15.700L4.900 19L3.200 15.300L12.700 8.100Z"/></svg></span></div><div class="col" style="left:146.600px"></div><div class="tm" style="left:162.400px"><span class="d">5</span><span class="d">0</span></div><div class="tl" style="left:20px">Hr</div><div class="tl" style="left:92px">Min</div><div class="tl" style="left:164px">Sec</div></div>

  <div class="panel" style="left:159px;top:532px;width:1051px;height:311px"></div>
  <div class="pt" style="left:178px;top:555px">SLA Compliance</div>
  <div class="pt" style="left:178px;top:593.500px">Open cases</div>
  <div class="pt" style="left:685px;top:593.500px">Closed cases</div>
  <svg style="left:0;top:0" width="1640" height="960" viewBox="0 0 1640 960"><path d="M259.05 705.5L259.05 624.60A80.9 80.9 0 1 1 232.71 781.99Z" fill="#45eba6" stroke="#14151a" stroke-width="1.4" stroke-linejoin="round"/><path d="M259.05 705.5L232.71 781.99A80.9 80.9 0 0 1 188.99 665.05Z" fill="#ffe15c" stroke="#14151a" stroke-width="1.4" stroke-linejoin="round"/><path d="M259.05 705.5L188.99 665.05A80.9 80.9 0 0 1 259.05 624.60Z" fill="#ff4545" stroke="#14151a" stroke-width="1.4" stroke-linejoin="round"/><path d="M765.05 705.5L765.05 624.60A80.9 80.9 0 1 1 702.18 654.59Z" fill="#45eba6" stroke="#14151a" stroke-width="1.4" stroke-linejoin="round"/><path d="M765.05 705.5L702.18 654.59A80.9 80.9 0 0 1 765.05 624.60Z" fill="#ff4545" stroke="#14151a" stroke-width="1.4" stroke-linejoin="round"/><circle cx="259.050" cy="705.500" r="2.600" fill="#050506"/></svg>
<div class="lg" style="left:352px;top:664px"><i style="background:#45eba6"></i>Within SLA 35.44%</div>
<div class="lg" style="left:352px;top:696px"><i style="background:#ffe15c"></i>Approaching SLA 35.44%</div>
<div class="lg" style="left:352px;top:727px"><i style="background:#ff4545"></i>Overdue 35.44%</div>
<div class="lg" style="left:858.5px;top:680px"><i style="background:#45eba6"></i>Within SLA 64.56%</div>
<div class="lg" style="left:858.5px;top:711.5px"><i style="background:#ff4545"></i>Overdue 10.4%</div>

  <div class="panel" style="left:1223px;top:532px;width:348px;height:311px"></div>
  <div class="pt" style="left:1243px;top:555px">Cases by Severity</div>
  <div class="gl" style="left:1323px"></div>
  <div class="gl" style="left:1427px"></div>
  <div class="gl" style="left:1532px"></div>
<div class="bl" style="top:597.75px">Critical</div><div class="bar" style="top:597px;width:70px;height:21px;background:#e67700"></div>
<div class="bl" style="top:653.75px">High</div><div class="bar" style="top:655px;width:112.75px;height:22px;background:#e69c05"></div>
<div class="bl" style="top:709.75px">Medium</div><div class="bar" style="top:714px;width:219.75px;height:22px;background:#e6b400"></div>
<div class="bl" style="top:765.75px">Low</div><div class="bar" style="top:773px;width:165px;height:21px;background:#e6cc00"></div>

  <div class="panel" style="left:159px;top:860px;width:1412px;height:80px"></div>
</div></div>
</body>
</html>
